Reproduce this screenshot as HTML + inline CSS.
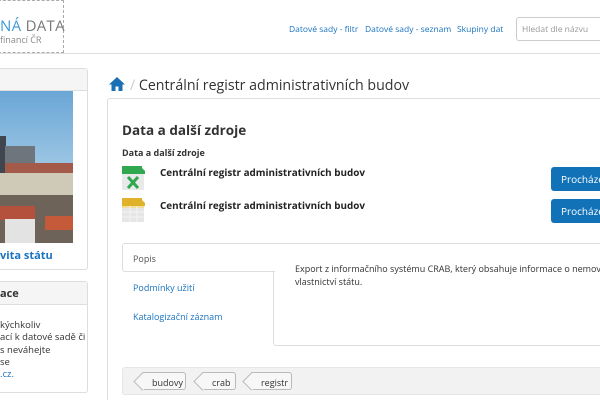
<!DOCTYPE html>
<html><head><meta charset="utf-8"><style>
*{box-sizing:border-box;margin:0;padding:0}
html{overflow:hidden;width:600px;height:400px}
body{width:600px;height:400px;overflow:hidden;background:#fff;font-family:"Open Sans","Liberation Sans",sans-serif;color:#333;position:relative}
.abs{position:absolute}
a{color:#1a73c0;text-decoration:none}
.tag{position:absolute;top:372px;height:18px;border:1px solid #bbb;border-left:none;border-radius:0 3px 3px 0;font-size:9px;padding:3px 0 0 10px;background:#f7f7f7}
.tag:before{content:"";position:absolute;left:-6px;top:2px;width:12px;height:12px;border-left:1px solid #bbb;border-bottom:1px solid #bbb;transform:rotate(45deg);background:#f7f7f7}
.tag span{position:relative}
</style></head><body>
<div class="abs" style="left:0;top:0;width:600px;height:54px;border-bottom:1px solid #ddd;background:#fff"></div>
<div class="abs" style="left:-2px;top:0;width:66px;height:53px;border:1px dashed #aaa"></div>
<div class="abs" style="left:0;top:16px;font-size:15px;letter-spacing:0.3px;white-space:nowrap"><span style="color:#3a9ad9">NÁ</span> <span style="color:#777">DATA</span></div>
<div class="abs" style="left:0;top:33px;font-size:9px;color:#888">financí ČR</div>
<div class="abs" style="left:289px;top:24px;font-size:8.5px;white-space:nowrap"><a>Datové sady - filtr</a></div>
<div class="abs" style="left:365px;top:24px;font-size:8.5px;white-space:nowrap"><a>Datové sady - seznam</a></div>
<div class="abs" style="left:457px;top:24px;font-size:8.5px;white-space:nowrap"><a>Skupiny dat</a></div>
<div class="abs" style="left:516px;top:17px;width:84px;height:24px;border:1px solid #ccc;border-right:none;border-radius:3px 0 0 3px;font-size:8.5px;color:#999;padding:6px 0 0 5px;white-space:nowrap;overflow:hidden">Hledat dle názvu</div>
<div class="abs" style="left:-3px;top:68px;width:91px;height:202px;border:1px solid #ddd;border-radius:3px;background:#fff"></div>
<div class="abs" style="left:-2px;top:69px;width:89px;height:22px;background:#f5f5f5;border-bottom:1px solid #ddd"></div>
<div class="abs" style="left:0;top:91px;width:73px;height:152px;overflow:hidden;background:#7fb2d9">
 <div class="abs" style="left:0;top:0;width:73px;height:75px;background:linear-gradient(#6aa6d6,#9cc6e3)"></div>
 <div class="abs" style="left:0;top:45px;width:6px;height:40px;background:#3f4650"></div>
 <div class="abs" style="left:5px;top:55px;width:30px;height:25px;background:#6f757c"></div>
 <div class="abs" style="left:5px;top:72px;width:68px;height:10px;background:#a45a48"></div>
 <div class="abs" style="left:0;top:82px;width:73px;height:30px;background:#cfc9b8"></div>
 <div class="abs" style="left:0;top:104px;width:73px;height:48px;background:#6d6358"></div>
 <div class="abs" style="left:0;top:115px;width:35px;height:14px;background:#b4513c"></div>
 <div class="abs" style="left:45px;top:125px;width:28px;height:14px;background:#c55a3a"></div>
 <div class="abs" style="left:5px;top:128px;width:30px;height:24px;background:#e3e3e3"></div>
</div>
<div class="abs" style="left:0;top:248px;font-size:11px;font-weight:bold;color:#1a73c0;white-space:nowrap">vita státu</div>
<div class="abs" style="left:-3px;top:281px;width:91px;height:112px;border:1px solid #ddd;border-radius:3px;background:#fff"></div>
<div class="abs" style="left:-2px;top:282px;width:89px;height:23px;background:#f5f5f5;border-bottom:1px solid #ddd"></div>
<div class="abs" style="left:0;top:286px;font-size:11px;font-weight:bold">ace</div>
<div class="abs" style="left:0;top:319px;font-size:9.5px;line-height:12.3px;white-space:nowrap">kýchkoliv<br>ací k datové sadě či<br>s neváhejte<br>se<br><a>.cz.</a></div>
<svg class="abs" style="left:108px;top:76px" width="18" height="16" viewBox="0 0 18 16"><path d="M9 1L1 8.5h2.5V15h4v-4.5h3V15h4V8.5H17L9 1z" fill="#1a6fb5"/></svg>
<div class="abs" style="left:130px;top:76px;font-size:14.2px;color:#333;white-space:nowrap"><span style="color:#ccc">/</span> Centrální registr administrativních budov</div>
<div class="abs" style="left:107px;top:98px;width:493px;height:302px;border:1px solid #ddd;border-right:none;border-bottom:none;border-radius:3px 0 0 0;background:#fff"></div>
<div class="abs" style="left:122px;top:121px;font-size:13.5px;font-weight:bold">Data a další zdroje</div>
<div class="abs" style="left:122px;top:146px;font-size:9px;font-weight:bold">Data a další zdroje</div>
<svg class="abs" style="left:122px;top:166px" width="23" height="24" viewBox="0 0 23 24"><rect x="0" y="0" width="20" height="8" fill="#2fa84f"/><path d="M20 2l3 3v3h-3z" fill="#2fa84f"/><rect x="0" y="8" width="22" height="16" fill="#e9e9e9"/><path d="M6 11l10 11M16 11L6 22" stroke="#2fa84f" stroke-width="3"/></svg>
<svg class="abs" style="left:122px;top:198px" width="23" height="24" viewBox="0 0 23 24"><rect x="0" y="0" width="20" height="8" fill="#e0b22a"/><path d="M20 2l3 3v3h-3z" fill="#e0b22a"/><rect x="0" y="8" width="22" height="16" fill="#e6e6e6"/><rect x="0" y="8" width="22" height="2" fill="#f3df9c"/><path d="M0 14h22M0 19h22M8 8v16M15 8v16" stroke="#f4f4f4"/></svg>
<div class="abs" style="left:160px;top:165px;font-size:9.9px;font-weight:bold;color:#222;white-space:nowrap">Centrální registr administrativních budov</div>
<div class="abs" style="left:160px;top:198px;font-size:9.9px;font-weight:bold;color:#222;white-space:nowrap">Centrální registr administrativních budov</div>
<div class="abs" style="left:551px;top:167px;width:49px;height:24px;background:#1172b8;border-radius:3px 0 0 3px;color:#fff;font-size:10px;padding:5px 0 0 10px;white-space:nowrap;overflow:hidden">Procházet</div>
<div class="abs" style="left:551px;top:199px;width:49px;height:24px;background:#1172b8;border-radius:3px 0 0 3px;color:#fff;font-size:10px;padding:5px 0 0 10px;white-space:nowrap;overflow:hidden">Procházet</div>
<div class="abs" style="left:273px;top:243px;width:327px;height:103px;border:1px solid #ddd;border-right:none;border-radius:3px 0 0 3px;background:#fff"></div>
<div class="abs" style="left:122px;top:243px;width:153px;height:29px;border:1px solid #ddd;border-right:none;border-radius:3px 0 0 3px;background:#fff"></div>
<div class="abs" style="left:133px;top:252px;font-size:9px;color:#555">Popis</div>
<div class="abs" style="left:133px;top:281px;font-size:9px;color:#1a73c0">Podmínky užití</div>
<div class="abs" style="left:133px;top:310px;font-size:9px;color:#1a73c0;white-space:nowrap">Katalogizační záznam</div>
<div class="abs" style="left:295px;top:262px;width:305px;overflow:hidden;font-size:9px;line-height:13px;white-space:nowrap">Export z informačního systému CRAB, který obsahuje informace o nemovit<br>vlastnictví státu.</div>
<div class="abs" style="left:122px;top:367px;width:478px;height:28px;background:#f2f2f2;border:1px solid #e6e6e6;border-right:none;border-radius:3px 0 0 3px"></div>
<div class="tag" style="left:142px;width:44px"><span>budovy</span></div>
<div class="tag" style="left:202px;width:34px"><span>crab</span></div>
<div class="tag" style="left:251px;width:41px"><span>registr</span></div>
</body></html>
